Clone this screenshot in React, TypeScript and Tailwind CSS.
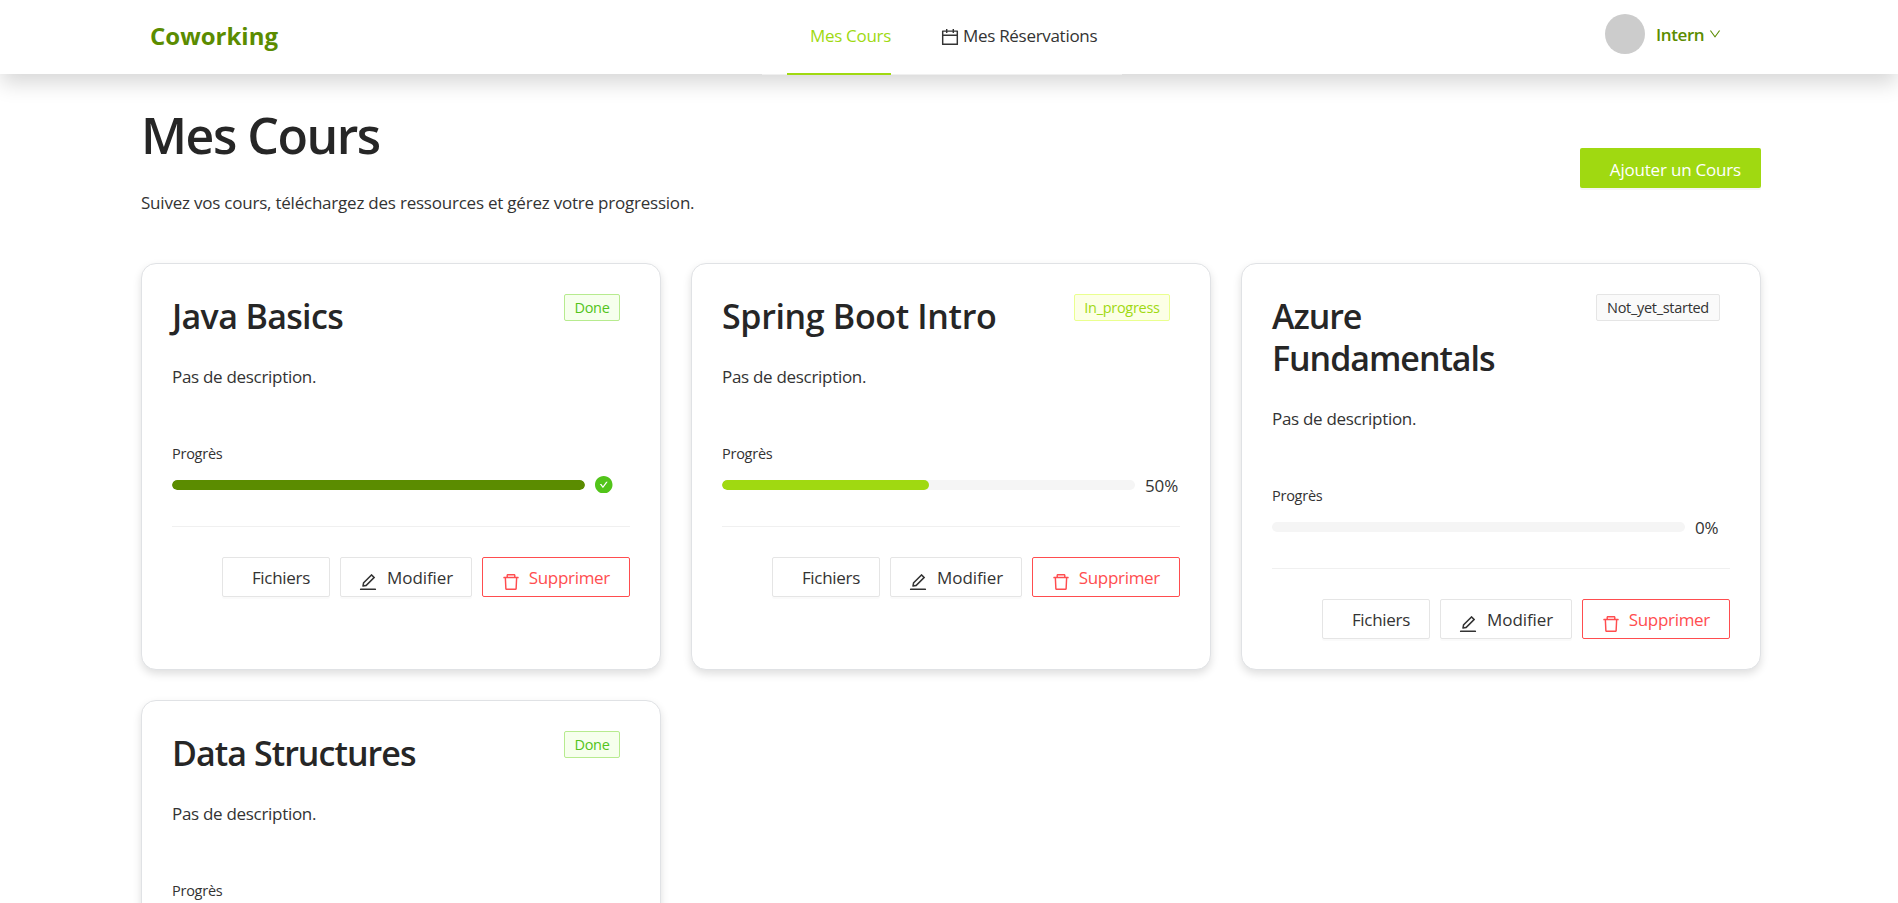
import { AiOutlineCalendar, AiOutlineDelete, AiOutlineDown, AiOutlineEdit, AiFillCheckCircle } from "react-icons/ai";

type Status = "Done" | "In_progress" | "Not_yet_started";
type Course = { title: string; status: Status; progress: number; tracking: string };

const courses: Course[] = [
  { title: "Java Basics", status: "Done", progress: 100, tracking: "tracking-[-0.65px]" },
  { title: "Spring Boot Intro", status: "In_progress", progress: 50, tracking: "tracking-[-0.35px]" },
  { title: "Azure Fundamentals", status: "Not_yet_started", progress: 0, tracking: "tracking-[-1.05px]" },
  { title: "Data Structures", status: "Done", progress: 100, tracking: "tracking-[-0.95px]" },
];

const tagStyle: Record<Status, string> = {
  Done: "w-14 border-[#b7eb8f] bg-[#f6ffed] text-[#52c41a]",
  In_progress: "w-24 border-[#eaff8f] bg-[#fcffe6] text-[#a0d911]",
  Not_yet_started: "w-[124px] border-[#e5e5e5] bg-[#fafafa] text-[#333]",
};

// Ant Design icons are drawn edge to edge inside this box.
const iconBox = "64 64 896 896";

function CourseCard({ title, status, progress, tracking }: Course) {
  return (
    <article className="rounded-[15px] border border-[#e0e2e5] bg-white p-[30px] shadow-[0_4px_8px_rgba(0,0,0,0.13)]">
      <div className="flex items-start justify-between">
        <h2 className={`w-[290px] pt-px pb-0.5 text-[34px] leading-[42px] font-semibold text-[#262626] ${tracking}`}>{title}</h2>
        <span className={`mr-2.5 flex h-[27px] shrink-0 items-center justify-center rounded-[2px] border text-[14.5px] tracking-[-0.3px] ${tagStyle[status]}`}>
          {status}
        </span>
      </div>
      <p className="mt-6 h-7 text-[17px] leading-7 tracking-[-0.3px]">Pas de description.</p>
      <p className="mt-[51px] h-6 text-[14.5px] leading-6 tracking-[-0.25px]">Progrès</p>
      <div className="mt-[5px] flex h-7 items-center">
        <div className="h-2.5 w-[413px] overflow-hidden rounded-full bg-[#f5f5f5]">
          <div
            className={`h-full rounded-full ${progress === 100 ? "bg-[#5b8c00]" : "bg-[#a0d911]"}`}
            style={{ width: `${progress}%` }}
          />
        </div>
        <span className="ml-2.5 pt-px text-[17px] tracking-[-0.1px]">
          {progress === 100 ? <AiFillCheckCircle viewBox={iconBox} className="-mt-0.5 size-[17.5px] text-[#52c41a]" /> : `${progress}%`}
        </span>
      </div>
      <div className="mt-[27px] flex justify-end gap-2.5 border-t border-[#f0f0f0] pt-[30px] text-[17px] tracking-[-0.3px]">
        <button className="flex h-10 w-[108px] items-center justify-end rounded-[2px] border border-[#e5e5e5] pt-0.5 pr-[19px] shadow-[0_2px_0_rgba(0,0,0,0.02)]">
          Fichiers
        </button>
        <button className="flex h-10 w-[132px] items-center justify-between rounded-[2px] border border-[#e5e5e5] pt-0.5 pr-[18px] pl-[18px] tracking-[-0.1px] shadow-[0_2px_0_rgba(0,0,0,0.02)]">
          <AiOutlineEdit viewBox={iconBox} className="mt-[7px] size-[18px]" />
          Modifier
        </button>
        <button className="flex h-10 w-[148px] items-center justify-between rounded-[2px] border border-[#ff4d4f] px-[19px] pt-0.5 text-[#ff4d4f]">
          <AiOutlineDelete viewBox={iconBox} className="mt-[7px] size-[18px]" />
          Supprimer
        </button>
      </div>
    </article>
  );
}

export default function App() {
  return (
    <div className="h-[903px] overflow-hidden bg-white font-['Open_Sans',sans-serif] text-[#333]">
      <header className="relative flex h-[74px] justify-between bg-white pr-44 pl-[150px] shadow-[0_10px_20px_-1px_rgba(0,0,0,0.16)]">
        <div className="w-[612px] pt-[18px] text-2xl leading-9 font-bold text-[#5b8c00]">Coworking</div>
        <nav className="flex h-[75px] w-[360px] border-b border-[#f0f0f0] pl-[25px] text-[17px] leading-[72px] tracking-[-0.3px]">
          <a className="h-[75px] w-[104px] border-b-2 border-[#a0d911] text-right whitespace-nowrap text-[#a0d911]">Mes Cours</a>
          <a className="ml-[50px] flex items-center gap-1 whitespace-nowrap">
            <AiOutlineCalendar viewBox={iconBox} className="size-[18px]" />
            <span className="h-[75px]">Mes Réservations</span>
          </a>
        </nav>
        <div className="flex w-[600px] justify-end gap-[11px] pt-[14px]">
          <div className="size-10 rounded-full bg-[#ccc]" />
          <div className="flex h-10 w-[66px] items-center gap-[5px] pt-0.5 text-[17px] font-semibold tracking-[-0.4px] text-[#5b8c00]">
            Intern
            <AiOutlineDown viewBox={iconBox} className="mb-[3px] size-3 shrink-0" />
          </div>
        </div>
      </header>
      <main className="ml-[141px] w-[1620px]">
        <div className="flex justify-between">
          <div>
            <h1 className="pt-[31px] text-[50px] leading-[60px] font-semibold tracking-[-1.5px] text-[#262626]">Mes Cours</h1>
            <p className="mt-6 text-[17px] leading-7 tracking-[-0.22px]">Suivez vos cours, téléchargez des ressources et gérez votre progression.</p>
          </div>
          <button className="mt-[74px] flex h-10 w-[181px] items-center justify-end rounded-[2px] bg-[#a0d911] pt-1 pr-5 text-[17px] tracking-[-0.2px] text-white shadow-[0_2px_0_rgba(0,0,0,0.04)]">
            Ajouter un Cours
          </button>
        </div>
        <section className="mt-[46px] grid grid-cols-3 gap-[30px]">
          {courses.map((course) => (
            <CourseCard key={course.title} {...course} />
          ))}
        </section>
      </main>
    </div>
  );
}
